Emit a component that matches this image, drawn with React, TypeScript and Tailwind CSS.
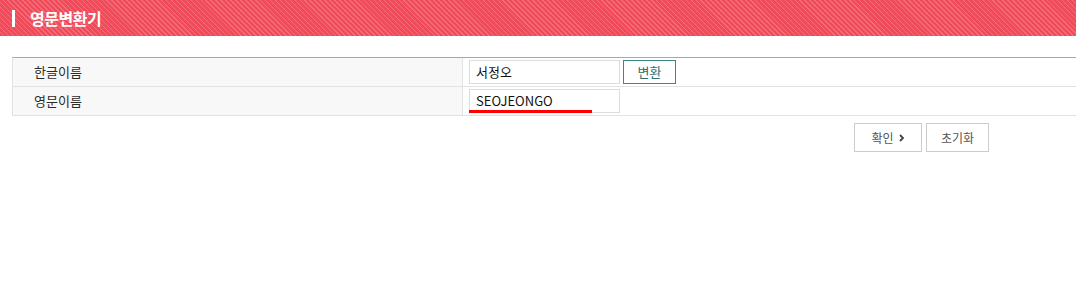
export default function App() {
  return (
    <div className="w-[1076px] h-[306px] bg-white font-['Noto_Sans_CJK_KR','Noto_Sans',sans-serif] overflow-hidden">
      <div className="h-[36px] flex items-center bg-[#f04b5b] bg-[repeating-linear-gradient(45deg,#f04b5b_0px,#f04b5b_2.4px,#f46c78_2.4px,#f46c78_3.5px)]">
        <span className="ml-[12px] w-[3px] h-[17px] bg-white" />
        <h1 className="ml-[15px] text-[16px] font-bold text-white tracking-[-0.5px] leading-none">영문변환기</h1>
      </div>

      <div className="mt-[21px] ml-[12px] border-t border-[#a3aaaa] border-l border-l-[#e2e2e2]">
        <div className="flex h-[29px] border-b border-[#e2e2e2]">
          <div className="w-[450px] bg-[#f8f8f8] border-r border-[#e2e2e2] flex items-center pl-[21px] text-[13px] text-[#2b2b2b]">
            한글이름
          </div>
          <div className="flex items-center pl-[6px] gap-[3px]">
            <div className="w-[151px] h-[24px] border border-[#dcdcdc] flex items-center pl-[6px] text-[13px] text-[#111]">
              서정오
            </div>
            <button className="w-[53px] h-[24px] border border-[#3b8785] text-[13px] text-[#2e6e6d] flex items-center justify-center">
              변환
            </button>
          </div>
        </div>
        <div className="flex h-[29px] border-b border-[#e2e2e2]">
          <div className="w-[450px] bg-[#f8f8f8] border-r border-[#e2e2e2] flex items-center pl-[21px] text-[13px] text-[#2b2b2b]">
            영문이름
          </div>
          <div className="flex items-center pl-[6px]">
            <div className="relative w-[151px] h-[24px] border border-[#dcdcdc] flex items-center pl-[6px] text-[13px] text-[#111]">
              SEOJEONGO
              <span className="absolute left-[-1px] bottom-[-1px] w-[123px] h-[3px] bg-[#ff0000]" />
            </div>
          </div>
        </div>
      </div>

      <div className="flex gap-[4px] ml-[854px] mt-[7px]">
        <button className="w-[68px] h-[29px] border border-[#cccccc] text-[12px] text-[#555] flex items-center justify-center gap-[5px]">
          확인
          <svg width="6" height="8" viewBox="0 0 6 8">
            <path d="M1 1l3 3-3 3" stroke="#444" strokeWidth="1.8" fill="none" />
          </svg>
        </button>
        <button className="w-[63px] h-[29px] border border-[#cccccc] text-[12px] text-[#555] flex items-center justify-center">
          초기화
        </button>
      </div>
    </div>
  );
}
